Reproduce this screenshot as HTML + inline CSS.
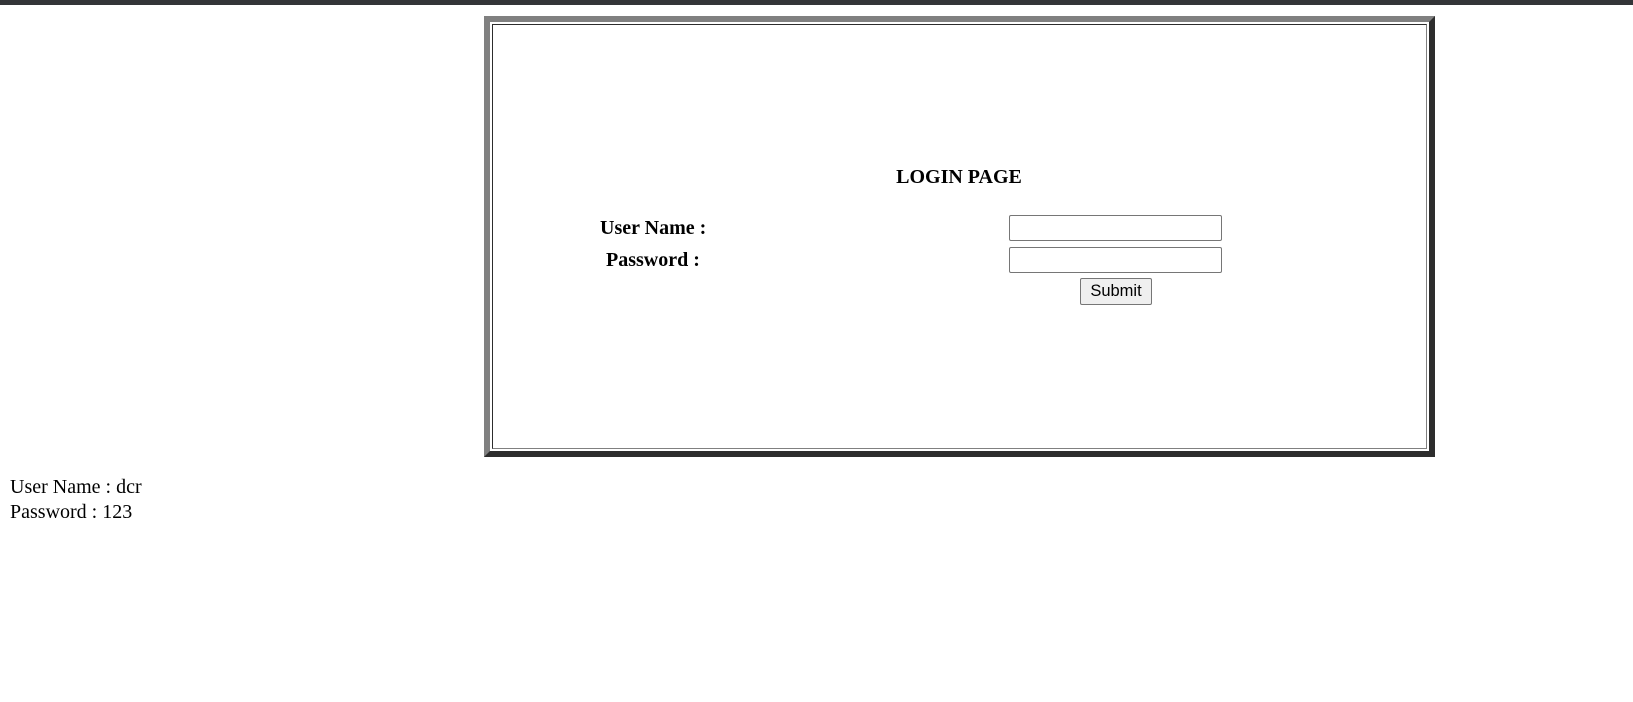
<!DOCTYPE html>
<html><head><style>
body{margin:0;width:1633px;height:702px;background:#fff;position:relative;font-family:"Liberation Serif",serif;overflow:hidden}
.bar{position:absolute;left:0;top:0;width:1633px;height:5px;background:#333538}
.outer{position:absolute;left:484px;top:16px;width:939px;height:429px;border:6px solid;border-color:#808080 #2d2d2d #2d2d2d #808080}
.inner{position:absolute;left:2px;top:2px;width:933px;height:423px;border:1px solid;border-color:#2d2d2d #808080 #808080 #2d2d2d}
.t{position:absolute;font-weight:bold;font-size:20px;white-space:nowrap;color:#000}
.in{position:absolute;left:1009px;width:213px;height:26px;border:1px solid #767676;border-radius:2px;box-sizing:border-box}
.btn{position:absolute;left:1080px;top:278px;width:72px;height:27px;box-sizing:border-box;border:1px solid #767676;border-radius:2px;background:#efefef;font-family:"Liberation Sans",sans-serif;font-size:16.5px;text-align:center;line-height:24px}
.p{position:absolute;left:10px;font-size:20px}
</style></head><body>
<div class="bar"></div>
<div class="outer"><div class="inner"></div></div>
<div class="t" style="left:859px;width:200px;text-align:center;top:166px">LOGIN PAGE</div>
<div class="t" style="left:600px;top:217px">User Name :</div>
<div class="t" style="left:606px;top:249px">Password :</div>
<div class="in" style="top:215px"></div>
<div class="in" style="top:247px"></div>
<div class="btn">Submit</div>
<div class="p" style="top:476px">User Name : dcr</div>
<div class="p" style="top:501px">Password : 123</div>
</body></html>
